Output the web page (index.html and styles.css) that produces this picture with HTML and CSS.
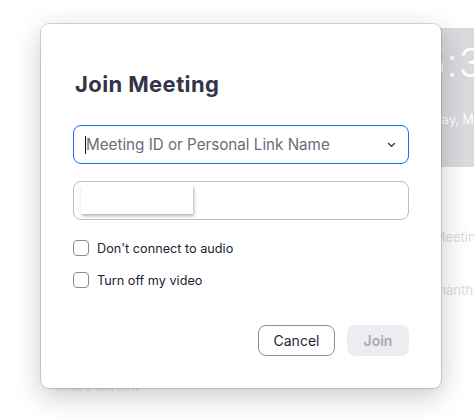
FILE: index.html
```html
<!DOCTYPE html>
<html lang="en">
  <head>
    <meta charset="UTF-8" />
    <meta name="viewport" content="width=device-width, initial-scale=1.0" />
    <title>Join Meeting</title>
    <link rel="stylesheet" href="styles.css">
  </head>
  <body>
    <div class="app">
      <div class="clock-panel">
        <div class="clock">15:30</div>
        <div class="date">Tuesday, May 4</div>
      </div>
      <div class="app-row row-meeting">Join a Meeting</div>
      <div class="app-row row-name">Samantha</div>
      <div class="app-row row-share">Share Screen</div>
    </div>

    <div class="overlay">
      <div class="dialog">
        <h2 class="title">Join Meeting</h2>
        <div class="field field-focus">
          <span class="caret"></span>
          <span class="placeholder">Meeting ID or Personal Link Name</span>
          <svg class="chevron" width="9" height="6" viewBox="0 0 9 6">
            <path d="M1.5 1.5 L4.5 4.2 L7.5 1.5" fill="none" stroke="#3b3b4a" stroke-width="1.4" stroke-linecap="round" stroke-linejoin="round"/>
          </svg>
        </div>
        <div class="field field-name">
          <div class="autofill"></div>
        </div>
        <label class="check">
          <span class="box"></span>
          Don't connect to audio
        </label>
        <label class="check">
          <span class="box"></span>
          Turn off my video
        </label>
        <div class="actions">
          <button class="btn btn-cancel">Cancel</button>
          <button class="btn btn-join">Join</button>
        </div>
      </div>
    </div>
  </body>
</html>
```

FILE: styles.css
```css
body {
  margin: 0;
  font-family: Inter, "Noto Sans", sans-serif;
  background: #fff;
  width: 474px;
  height: 419px;
  overflow: hidden;
  position: relative;
}
.app {
  position: absolute;
  inset: 0;
}
.clock-panel {
  position: absolute;
  left: 300px;
  top: 28px;
  width: 174px;
  height: 139px;
  background: #d9dadd;
  color: #fff;
  overflow: hidden;
}
.clock {
  position: absolute;
  left: 105px;
  top: 10px;
  font-size: 40px;
  font-weight: 300;
  letter-spacing: 1px;
}
.date {
  position: absolute;
  left: 106px;
  top: 84px;
  font-size: 12.5px;
  white-space: nowrap;
}
.app-row {
  position: absolute;
  font-size: 13px;
  color: #dcdce0;
  white-space: nowrap;
}
.row-meeting {
  left: 393px;
  top: 229px;
}
.row-name {
  left: 419px;
  top: 282px;
}
.row-share {
  left: 55px;
  top: 378px;
  font-weight: 600;
  color: #ececee;
}
.overlay {
  position: absolute;
  left: 41px;
  top: 24px;
}
.dialog {
  width: 400px;
  height: 364px;
  box-sizing: border-box;
  background: #fff;
  border-radius: 8px;
  box-shadow: 0 0 0 1px rgba(0, 0, 0, 0.14), 0 8px 28px rgba(0, 0, 0, 0.22);
  padding: 48px 32px 0 32px;
  display: flex;
  flex-direction: column;
}
.title {
  margin: 0;
  font-size: 22px;
  line-height: 25px;
  font-weight: 700;
  letter-spacing: 0.4px;
  color: #34344a;
  padding-left: 2px;
}
.field {
  height: 39px;
  box-sizing: border-box;
  border-radius: 8px;
  display: flex;
  align-items: center;
  position: relative;
}
.field-focus {
  margin-top: 28px;
  border: 1px solid #0e71eb;
  padding: 0 11px;
}
.caret {
  width: 1px;
  height: 18px;
  background: #111;
}
.placeholder {
  font-size: 15.2px;
  color: #6b6b7a;
  flex: 1;
}
.chevron {
  margin-right: 1px;
}
.field-name {
  margin-top: 17px;
  border: 1px solid #bcbccb;
}
.autofill {
  position: absolute;
  left: 7px;
  top: 3px;
  width: 112px;
  height: 29px;
  background: #fff;
  box-shadow: 1px 2px 3px rgba(0, 0, 0, 0.3);
}
.check {
  display: flex;
  align-items: center;
  gap: 8px;
  font-size: 12.7px;
  color: #232333;
  height: 16px;
}
.check:first-of-type {
  margin-top: 20px;
}
.check + .check {
  margin-top: 16px;
}
.box {
  width: 14px;
  height: 14px;
  border: 1px solid #8b8b96;
  border-radius: 4px;
}
.actions {
  margin-top: 37px;
  display: flex;
  justify-content: flex-end;
  gap: 12px;
}
.btn {
  height: 31px;
  border-radius: 8px;
  font-family: Inter, "Noto Sans", sans-serif;
  font-size: 14px;
  cursor: pointer;
}
.btn-cancel {
  width: 77px;
  background: #fff;
  border: 1px solid #8e8e99;
  color: #232333;
}
.btn-join {
  width: 62px;
  background: #ededf1;
  border: none;
  color: #a8a8b3;
  font-weight: 600;
}
```
